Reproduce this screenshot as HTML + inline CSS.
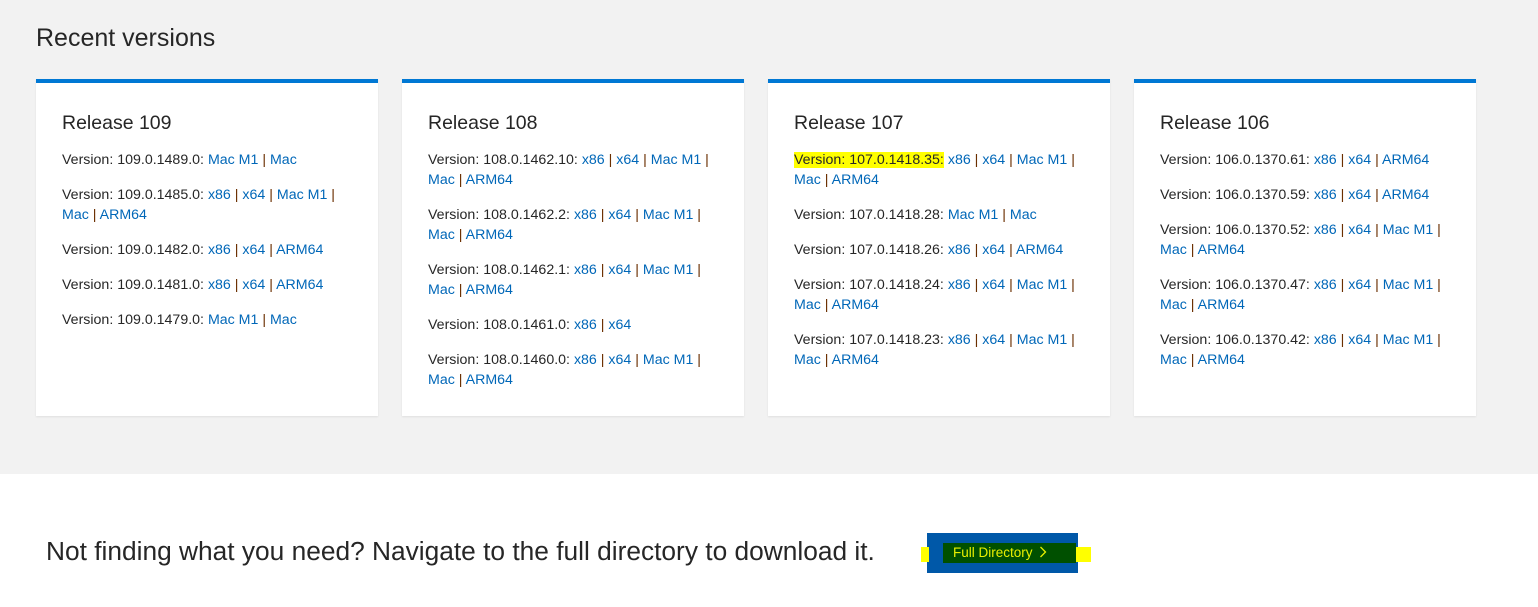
<!DOCTYPE html>
<html><head><style>
body{margin:0;width:1538px;height:607px;background:#fff;font-family:"Segoe UI","Liberation Sans",sans-serif;overflow:hidden}
.top{background:#f2f2f2;height:474px;position:relative}
h2{position:absolute;left:36px;top:24px;margin:0;font-weight:300;font-size:25px;color:#262626}
.card{position:absolute;top:79px;width:292px;height:307px;background:#fff;border-top:4px solid #0078d4;padding:26px 24px 0 26px;box-shadow:0 1px 2px rgba(0,0,0,.08)}
.card h3{margin:0 0 13px;font-weight:300;font-size:19.5px;color:#262626;line-height:28px}
.card p{margin:0 0 15px;font-size:14.2px;line-height:20px;color:#262626}
a{color:#0067b8;text-decoration:none}
.s{color:#6b2f00}
.hl{background:#ffff00}
.bottom{position:absolute;left:46px;top:536px;font-size:26.3px;font-weight:300;color:#262626}
.btn{position:absolute;left:927px;top:533px;width:151px;height:40px;background:#0058a8}
.g{position:absolute;left:943px;top:543px;width:133px;height:20px;background:#005000}
.y1{position:absolute;left:921px;top:547px;width:8px;height:15px;background:#ffff00}
.y2{position:absolute;left:1076px;top:547px;width:15px;height:15px;background:#ffff00}
.bt{position:absolute;left:953px;top:545px;font-size:13.5px;color:#e8f000}
</style></head><body>
<div class="top">
<h2>Recent versions</h2>
<div class="card" style="left:36px">
<h3>Release 109</h3>
<p>Version: 109.0.1489.0: <a>Mac M1</a> <span class="s">|</span> <a>Mac</a></p>
<p>Version: 109.0.1485.0: <a>x86</a> <span class="s">|</span> <a>x64</a> <span class="s">|</span> <a>Mac M1</a> <span class="s">|</span><br><a>Mac</a> <span class="s">|</span> <a>ARM64</a></p>
<p>Version: 109.0.1482.0: <a>x86</a> <span class="s">|</span> <a>x64</a> <span class="s">|</span> <a>ARM64</a></p>
<p>Version: 109.0.1481.0: <a>x86</a> <span class="s">|</span> <a>x64</a> <span class="s">|</span> <a>ARM64</a></p>
<p>Version: 109.0.1479.0: <a>Mac M1</a> <span class="s">|</span> <a>Mac</a></p>
</div>
<div class="card" style="left:402px">
<h3>Release 108</h3>
<p>Version: 108.0.1462.10: <a>x86</a> <span class="s">|</span> <a>x64</a> <span class="s">|</span> <a>Mac M1</a> <span class="s">|</span><br><a>Mac</a> <span class="s">|</span> <a>ARM64</a></p>
<p>Version: 108.0.1462.2: <a>x86</a> <span class="s">|</span> <a>x64</a> <span class="s">|</span> <a>Mac M1</a> <span class="s">|</span><br><a>Mac</a> <span class="s">|</span> <a>ARM64</a></p>
<p>Version: 108.0.1462.1: <a>x86</a> <span class="s">|</span> <a>x64</a> <span class="s">|</span> <a>Mac M1</a> <span class="s">|</span><br><a>Mac</a> <span class="s">|</span> <a>ARM64</a></p>
<p>Version: 108.0.1461.0: <a>x86</a> <span class="s">|</span> <a>x64</a></p>
<p>Version: 108.0.1460.0: <a>x86</a> <span class="s">|</span> <a>x64</a> <span class="s">|</span> <a>Mac M1</a> <span class="s">|</span><br><a>Mac</a> <span class="s">|</span> <a>ARM64</a></p>
</div>
<div class="card" style="left:768px">
<h3>Release 107</h3>
<p><span class="hl">Version: 107.0.1418.35:</span> <a>x86</a> <span class="s">|</span> <a>x64</a> <span class="s">|</span> <a>Mac M1</a> <span class="s">|</span><br><a>Mac</a> <span class="s">|</span> <a>ARM64</a></p>
<p>Version: 107.0.1418.28: <a>Mac M1</a> <span class="s">|</span> <a>Mac</a></p>
<p>Version: 107.0.1418.26: <a>x86</a> <span class="s">|</span> <a>x64</a> <span class="s">|</span> <a>ARM64</a></p>
<p>Version: 107.0.1418.24: <a>x86</a> <span class="s">|</span> <a>x64</a> <span class="s">|</span> <a>Mac M1</a> <span class="s">|</span><br><a>Mac</a> <span class="s">|</span> <a>ARM64</a></p>
<p>Version: 107.0.1418.23: <a>x86</a> <span class="s">|</span> <a>x64</a> <span class="s">|</span> <a>Mac M1</a> <span class="s">|</span><br><a>Mac</a> <span class="s">|</span> <a>ARM64</a></p>
</div>
<div class="card" style="left:1134px">
<h3>Release 106</h3>
<p>Version: 106.0.1370.61: <a>x86</a> <span class="s">|</span> <a>x64</a> <span class="s">|</span> <a>ARM64</a></p>
<p>Version: 106.0.1370.59: <a>x86</a> <span class="s">|</span> <a>x64</a> <span class="s">|</span> <a>ARM64</a></p>
<p>Version: 106.0.1370.52: <a>x86</a> <span class="s">|</span> <a>x64</a> <span class="s">|</span> <a>Mac M1</a> <span class="s">|</span><br><a>Mac</a> <span class="s">|</span> <a>ARM64</a></p>
<p>Version: 106.0.1370.47: <a>x86</a> <span class="s">|</span> <a>x64</a> <span class="s">|</span> <a>Mac M1</a> <span class="s">|</span><br><a>Mac</a> <span class="s">|</span> <a>ARM64</a></p>
<p>Version: 106.0.1370.42: <a>x86</a> <span class="s">|</span> <a>x64</a> <span class="s">|</span> <a>Mac M1</a> <span class="s">|</span><br><a>Mac</a> <span class="s">|</span> <a>ARM64</a></p>
</div>
</div>
<div class="bottom">Not finding what you need? Navigate to the full directory to download it.</div>
<div class="btn"></div><div class="g"></div><div class="y1"></div><div class="y2"></div>
<div class="bt">Full Directory <svg width="8" height="12" viewBox="0 0 8 12" style="vertical-align:-1px;margin-left:3px"><path d="M1.5 1 L6.5 6 L1.5 11" fill="none" stroke="#e8f000" stroke-width="1.3"/></svg></div>
</body></html>
